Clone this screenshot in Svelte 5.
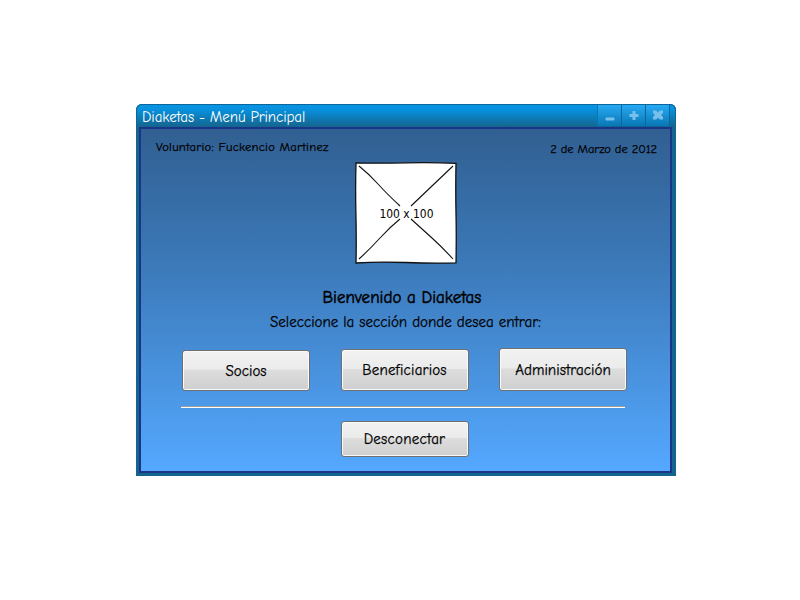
<script>
  const sections = [
    { label: 'Socios', height: 41, spacing: 0.05 },
    { label: 'Beneficiarios', height: 42, spacing: 0.2 },
    { label: 'Administración', height: 43, spacing: 0.05 }
  ];
</script>

<main>
  <section class="window">
    <header>
      <h1>Diaketas - Menú Principal</h1>
      <div class="controls">
        <button aria-label="Minimizar">
          <svg width="12" height="12"><rect x="1.5" y="7.500" width="9" height="3" rx="1" /></svg>
        </button>
        <button aria-label="Maximizar">
          <svg width="12" height="12"><path d="M4.500 1h3v3h3v3h-3v3h-3V7h-3V4h3z" /></svg>
        </button>
        <button aria-label="Cerrar">
          <svg width="12" height="12"><path d="M1 .5h3.200L6 2.500l1.800-2H11V3L9 5l2 2v2.500H7.800L6 7.500l-1.800 2H1V7l2-2-2-2z" /></svg>
        </button>
      </div>
    </header>

    <div class="body">
      <div class="info">
        <span class="user">Voluntario: Fuckencio Martinez</span>
        <span class="date">2 de Marzo de 2012</span>
      </div>

      <svg class="placeholder" width="104" height="104" viewBox="0 0 104 104">
        <path class="frame" d="M2 2Q28 2.500 52 1.800T102 2.300Q101.500 28 102 52T102 101.800Q80 102.500 52 101.500T2 102Q2.500 76 1.900 52T2 2Z" />
        <path class="cross" d="M5 5Q15 13 24 23T46 45M99 5L57 45M5 98Q16 88 26 77T46 58M57 58Q68 68 78 77T99 98" />
        <text x="25.500" y="57" textLength="54" lengthAdjust="spacingAndGlyphs">100 x 100</text>
      </svg>

      <h2>Bienvenido a Diaketas</h2>
      <p>Seleccione la sección donde desea entrar:</p>

      <nav>
        {#each sections as item}
          <button class="action" style:height="{item.height}px" style:letter-spacing="{item.spacing}px">{item.label}</button>
        {/each}
      </nav>
      <hr />
      <button class="action logout">Desconectar</button>
    </div>
  </section>
</main>

<style>
  :global(body) { background: #fff; }
  main {
    width: 800px;
    height: 600px;
    box-sizing: border-box;
    padding: 104px 0 0 136px;
    font-family: "Comic Sans MS", "Comic Neue", "Open Sans", "Noto Sans", sans-serif;
    color: #000;
    -webkit-text-stroke: 0.25px currentColor;
  }
  h1, h2, p, hr, button { margin: 0; padding: 0; font: inherit; border: 0; }
  .window {
    width: 540px;
    height: 372px;
    box-sizing: border-box;
    padding: 0 4px 3px 3px;
    border-radius: 6px 6px 0 0;
    background: linear-gradient(#0a95e4 0, #0790dc 6px, #14648d 23px, #14648d 100%);
    box-shadow: inset 0 1px #0b669b, inset 1px 0 #14648d, inset -1px 0 #14648d;
  }
  header { display: flex; justify-content: space-between; height: 23px; padding: 0 2px 0 3px; }
  h1 { color: #fff; font-size: 15px; line-height: 27px; letter-spacing: -0.1px; white-space: nowrap; -webkit-text-stroke: 0; }
  .controls { display: flex; margin-top: 1px; height: 21px; border-left: 1px solid #0877b5; }
  .controls button {
    width: 24px;
    height: 21px;
    display: flex;
    justify-content: center;
    padding-top: 5px;
    box-sizing: border-box;
    border-right: 1px solid #08659a;
    background: linear-gradient(#28a9f5, #0877b4);
  }
  .controls svg { fill: #76c0e9; }
  .body {
    height: 346px;
    box-sizing: border-box;
    border: 2px solid #1a3488;
    background: linear-gradient(#315f91, #3b78b7 38%, #54a8ff);
    display: flex;
    flex-direction: column;
    align-items: center;
  }
  .info {
    align-self: stretch;
    height: 32px;
    display: flex;
    justify-content: space-between;
    padding: 0 13px 0 15px;
    white-space: nowrap;
  }
  .user { font-size: 12.5px; line-height: 36px; letter-spacing: 0.28px; }
  .date { font-size: 12.5px; line-height: 40px; letter-spacing: -0.08px; }
  .placeholder { flex: none; }
  .frame { fill: #fff; stroke: #111; stroke-width: 1.300; }
  .cross { fill: none; stroke: #111; stroke-width: 1.100; }
  text { font-family: "DejaVu Sans Condensed", "DejaVu Sans", sans-serif; font-size: 12px; -webkit-text-stroke: 0; }
  h2 { margin-top: 20px; margin-right: 7px; font-size: 17px; font-weight: 400; line-height: 25px; letter-spacing: 0; white-space: nowrap; -webkit-text-stroke: 0.5px currentColor; }
  p { font-size: 15px; line-height: 24px; white-space: nowrap; }
  nav {
    flex: none;
    width: 445px;
    height: 43px;
    margin-top: 14px;
    margin-left: -2px;
    display: flex;
    justify-content: space-between;
    align-items: flex-end;
  }
  .action {
    flex: none;
    width: 128px;
    border: 1px solid #707070;
    border-radius: 3px;
    box-sizing: border-box;
    box-shadow: inset 0 0 0 1px #fafafa;
    background: linear-gradient(#f2f2f2, #ebebeb 47%, #dddddd 48%, #cfcfcf);
    font-size: 15px;
    color: #000;
    text-align: center;
  }
  hr { flex: none; width: 444px; height: 2px; margin: 15px 5px 0 0; background: linear-gradient(#a0a0a0 50%, #fff 50%); }
  .logout { height: 36px; margin: 13px 2px 0 0; letter-spacing: 0.25px; }
</style>
